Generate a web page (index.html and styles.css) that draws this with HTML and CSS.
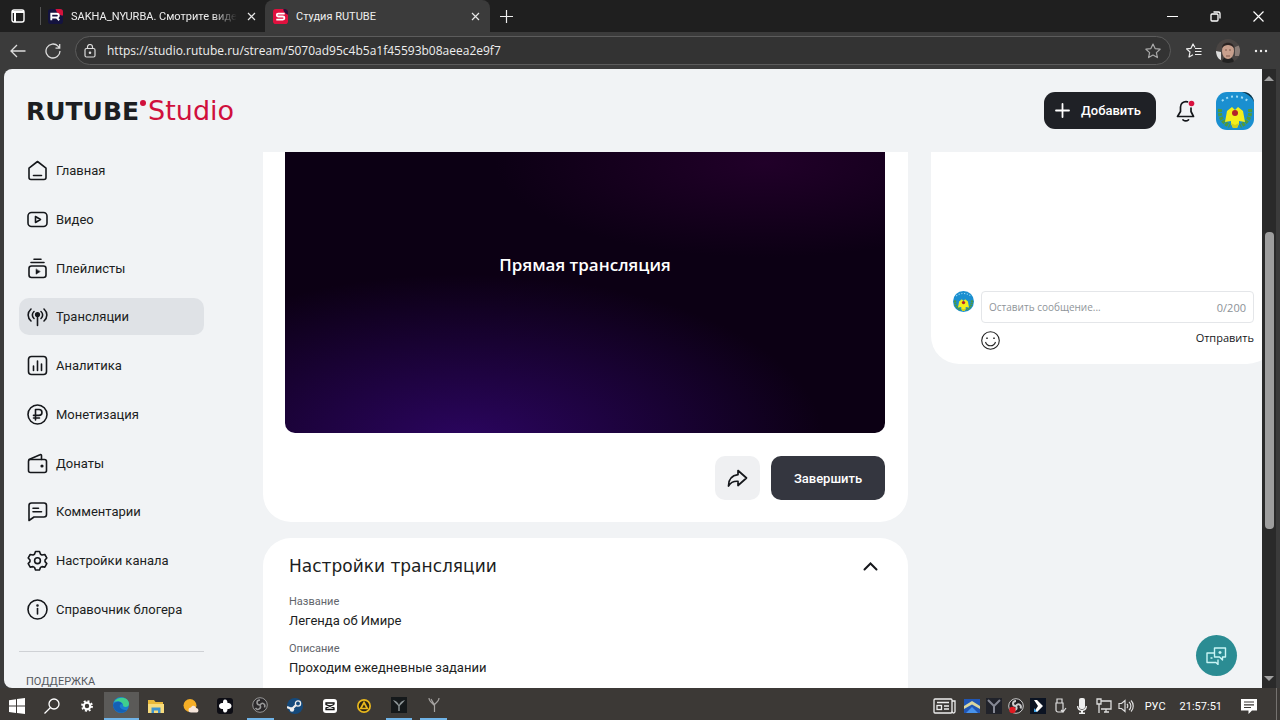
FILE: index.html
```html
<!DOCTYPE html>
<html lang="ru">
<head>
    <meta charset="UTF-8">
    <meta name="viewport" content="width=device-width, initial-scale=1.0">
    <title>Студия RUTUBE</title>
    <link rel="stylesheet" href="styles.css">
</head>
<body>
    <!-- общие картинки -->
    <svg class="defs" aria-hidden="true">
        <symbol id="emblem" viewBox="0 0 38 38">
            <rect width="38" height="38" fill="#1a8fd0"/>
            <path d="M26 0h12v10C36 5 32 2 26 0z" fill="#10303f"/>
            <path d="M6 9C13 3 25 3 32 9" fill="none" stroke="#9fdcf5" stroke-width="2" stroke-dasharray="2 3"/>
            <path d="M4 17c-1 8 3 14 10 17M34 17c1 8-3 14-10 17" fill="none" stroke="#4f9a3c" stroke-width="4" stroke-dasharray="3 1"/>
            <path d="M9 30l2-11 5-4 3 3 3-3 5 4 2 11-6-1v3l-2 4h-4l-2-4v-3z" fill="#f3ee1c"/>
            <path d="M15 31l4 2 4-2-2 5h-4z" fill="#d0cf1c"/>
            <circle cx="19" cy="21" r="3" fill="#b3202b"/>
        </symbol>
    </svg>

    <div class="tabs">
        <button class="tab-menu" aria-label="Вкладки">
            <svg width="14" height="14" viewBox="0 0 14 14" fill="none" stroke="#fff" stroke-width="1.4"><rect x="1" y="1" width="12" height="12" rx="2"/><path d="M1 3h12M4 3v10" stroke-width="2"/></svg>
        </button>
        <div class="tab">
            <svg class="favicon" viewBox="0 0 16 16"><rect width="16" height="16" rx="3" fill="#14133f"/><path d="M8 0h5a3 3 0 0 1 3 3v4C12 7 9 4 8 0z" fill="#d4133c"/><path d="M3.500 12V5h6a2 2 0 0 1 0 4h-6M9 9l3 3" fill="none" stroke="#fff" stroke-width="2"/></svg>
            <span class="tab-title faded">SAKHA_NYURBA. Смотрите виде</span>
            <button class="tab-close" aria-label="Закрыть"><svg width="9" height="9" viewBox="0 0 9 9" stroke="#e6e6e6" stroke-width="1.2"><path d="M1 1l7 7M8 1l-7 7"/></svg></button>
        </div>
        <div class="tab active">
            <svg class="favicon" viewBox="0 0 16 16"><rect width="16" height="16" rx="3" fill="#e0103e"/><path d="M11 0h2a3 3 0 0 1 3 3v3C13 5 11 3 11 0z" fill="#2b123b"/><path d="M12.500 5H5.500a1.500 1.500 0 0 0 0 3h5a1.700 1.700 0 0 1 0 3.400H3.500" fill="none" stroke="#fff" stroke-width="1.900"/></svg>
            <span class="tab-title">Студия RUTUBE</span>
            <button class="tab-close" aria-label="Закрыть"><svg width="9" height="9" viewBox="0 0 9 9" stroke="#e6e6e6" stroke-width="1.2"><path d="M1 1l7 7M8 1l-7 7"/></svg></button>
        </div>
        <button class="tab-new" aria-label="Новая вкладка"><svg width="13" height="13" viewBox="0 0 13 13" stroke="#eee" stroke-width="1.2"><path d="M6.500 0v13M0 6.500h13"/></svg></button>
        <div class="window-buttons">
            <button aria-label="Свернуть"><svg width="11" height="11" viewBox="0 0 11 11" stroke="#fff"><path d="M0 5.500h11"/></svg></button>
            <button aria-label="Восстановить"><svg width="11" height="11" viewBox="0 0 11 11" fill="none" stroke="#fff" stroke-width="1.300"><rect x="1" y="3" width="7" height="7" rx="1"/><path d="M3.500 1h5A1.500 1.500 0 0 1 10 2.500v5"/></svg></button>
            <button aria-label="Закрыть окно"><svg width="11" height="11" viewBox="0 0 11 11" stroke="#fff" stroke-width="1.200"><path d="M.5.5l10 10M10.500.5l-10 10"/></svg></button>
        </div>
    </div>

    <div class="toolbar">
        <button aria-label="Назад"><svg width="16" height="14" viewBox="0 0 16 14" fill="none" stroke="#ddd" stroke-width="1.300"><path d="M15.500 7H1M7 1L1 7l6 6"/></svg></button>
        <button aria-label="Обновить"><svg width="16" height="16" viewBox="0 0 16 16" fill="none" stroke="#ddd" stroke-width="1.300"><path d="M15 8a7 7 0 1 1-2-4.900L14.500 5M14.700 1v4.200h-4.200"/></svg></button>
        <div class="address">
            <svg width="12" height="14" viewBox="0 0 12 14" fill="none" stroke="#ddd" stroke-width="1.200"><rect x="1" y="4.500" width="10" height="8.500" rx="1.500"/><path d="M3.500 4.500V3a2.500 2.500 0 0 1 5 0v1.500"/><circle cx="6" cy="8.700" r=".7" fill="#ddd"/></svg>
            <input type="text" aria-label="Адрес" value="https://studio.rutube.ru/stream/5070ad95c4b5a1f45593b08aeea2e9f7">
            <button aria-label="В избранное"><svg width="16" height="16" viewBox="0 0 16 16" fill="none" stroke="#a9a9a9" stroke-width="1.200" stroke-linejoin="round"><path d="M8 1l2.100 4.600 5 .6-3.700 3.400 1 5L8 12.100l-4.400 2.500 1-5L.9 6.200l5-.6z"/></svg></button>
        </div>
        <div class="toolbar-right">
            <button aria-label="Избранное"><svg width="16" height="16" viewBox="0 0 16 16" fill="none" stroke="#eee" stroke-width="1.200" stroke-linejoin="round"><path d="M9 4.500L7 1 5 5.300l-4.500.6L4 9l-1 5 4-2.300M9 5.500h6.500M9 8.500h6.500M9 11.500h6.500"/></svg></button>
            <button aria-label="Профиль">
                <svg width="24" height="24" viewBox="0 0 24 24"><defs><clipPath id="face"><circle cx="12" cy="12" r="12"/></clipPath></defs><g clip-path="url(#face)"><rect width="24" height="24" fill="#4a4543"/><path d="M0 12l5 1v8l-5-2z" fill="#ddd"/><path d="M24 6l-5 2v9h5z" fill="#8b7d77"/><path d="M6 24c0-5 3-6 6-6s6 1 6 6z" fill="#222"/><ellipse cx="12" cy="12" rx="6" ry="8" fill="#c9a08d"/><path d="M6 9c0-7 12-7 12 0-3-4-9-4-12 0z" fill="#2a2322"/><path d="M9 11h2M13 11h2M10 17h4" stroke="#80584c"/></g></svg>
            </button>
            <button aria-label="Ещё"><svg width="14" height="4" viewBox="0 0 14 4" fill="#eee"><circle cx="2" cy="2" r="1.200"/><circle cx="7" cy="2" r="1.200"/><circle cx="12" cy="2" r="1.200"/></svg></button>
        </div>
    </div>

    <div class="window">
        <div class="page">
            <header class="header">
                <a class="logo" href="#"><span class="logo-main">RUTUBE</span><span class="logo-dot"></span><span class="logo-sub">Studio</span></a>
                <div class="header-actions">
                    <button class="add-button"><svg width="15" height="15" viewBox="0 0 15 15" stroke="#fff" stroke-width="1.800" stroke-linecap="round"><path d="M7.500 1v13M1 7.500h13"/></svg>Добавить</button>
                    <button class="bell" aria-label="Уведомления"><svg width="20" height="22" viewBox="0 0 20 22" fill="none" stroke="#15171b" stroke-width="1.700" stroke-linejoin="round" stroke-linecap="round"><path d="M11.500 1.800C7 1 4.500 4 4.500 7v4.500L1.500 16.500h16L15 11.500V8M7 19.800c1.500 1.200 4 1.200 5.500 0"/><circle cx="15.500" cy="3.500" r="2.800" fill="#d9123f" stroke="none"/></svg></button>
                    <button class="avatar" aria-label="Профиль"><svg width="38" height="38"><use href="#emblem"/></svg></button>
                </div>
            </header>

            <div class="content">
                <aside class="sidebar">
                    <nav>
                        <a href="#"><svg viewBox="0 0 21 21"><path d="M2 8.200L10.500 1.500 19 8.200V17.500a2 2 0 0 1-2 2H4a2 2 0 0 1-2-2zM6.500 15.500h8"/></svg>Главная</a>
                        <a href="#"><svg viewBox="0 0 21 21"><rect x="1" y="3.500" width="19" height="14" rx="3.500"/><path d="M8.500 7.500v6l5-3z"/></svg>Видео</a>
                        <a href="#"><svg viewBox="0 0 21 21"><rect x="2" y="8" width="17" height="11.500" rx="2.500"/><path d="M4 4.500h13M7 1.200h7"/><path d="M9 11.200v5l4-2.500z" fill="#15171b" stroke-width=".5"/></svg>Плейлисты</a>
                        <a href="#" class="active"><svg viewBox="0 0 21 21"><path d="M10.500 8v11.500M4 3C.2 6.500.2 11.500 4 15M17 3c3.800 3.500 3.800 8.500 0 12M7 5.500c-2.200 2-2.200 5 0 7M14 5.500c2.200 2 2.200 5 0 7"/><circle cx="10.500" cy="8.500" r="1.800" fill="#15171b"/></svg>Трансляции</a>
                        <a href="#"><svg viewBox="0 0 21 21"><rect x="1.500" y="1.500" width="18" height="18" rx="3"/><path d="M6.500 11v4.500M10.500 6v9.500M14.500 9v6.500"/></svg>Аналитика</a>
                        <a href="#"><svg viewBox="0 0 21 21"><circle cx="10.500" cy="10.500" r="9.500"/><path d="M8.500 16V5.500H12a2.900 2.900 0 0 1 0 5.900H6.500M6.500 14h6"/></svg>Монетизация</a>
                        <a href="#"><svg viewBox="0 0 21 21"><rect x="1.500" y="6.500" width="18" height="13" rx="2"/><path d="M2 6.500l11-4.800a1 1 0 0 1 1.500.8v4"/><circle cx="15" cy="13" r=".8" fill="#15171b"/></svg>Донаты</a>
                        <a href="#"><svg viewBox="0 0 21 21"><path d="M4.500 2h12.500a2.500 2.500 0 0 1 2.500 2.500v9a2.500 2.500 0 0 1-2.500 2.500H7l-5 3.500V4.500A2.500 2.500 0 0 1 4.500 2zM6 7.200h5.500M6 10.800h8.500"/></svg>Комментарии</a>
                        <a href="#"><svg viewBox="0 0 21 21"><path d="M8.500 1.500h4l1 2.700 1.500.8 2.800-.5 2 3.400-1.800 2.100v1.600l1.800 2-2 3.500-2.800-.5-1.500.8-1 2.600h-4l-1-2.600-1.500-.8-2.800.5-2-3.500 1.800-2V10L1.200 7.900l2-3.400 2.800.5 1.500-.8z"/><circle cx="10.500" cy="10.700" r="2.900"/></svg>Настройки канала</a>
                        <a href="#"><svg viewBox="0 0 21 21"><circle cx="10.500" cy="10.500" r="9.500"/><path d="M10.500 9.500v5.500"/><circle cx="10.500" cy="6.500" r=".5" fill="#15171b"/></svg>Справочник блогера</a>
                    </nav>
                    <p class="sidebar-title">ПОДДЕРЖКА</p>
                </aside>

                <main>
                    <section class="card stream">
                        <div class="player">Прямая трансляция</div>
                        <div class="stream-actions">
                            <button class="share" aria-label="Поделиться"><svg width="21" height="19" viewBox="0 0 21 19" fill="none" stroke="#15171b" stroke-width="1.700" stroke-linejoin="round"><path d="M11 1.500l8.500 7.500-8.500 7.500v-4.200C6.500 12 3.500 13.500 1.500 17 1.500 10.500 5 6.500 11 5.700z"/></svg></button>
                            <button class="finish">Завершить</button>
                        </div>
                    </section>
                    <section class="card settings">
                        <div class="settings-head">
                            <h2>Настройки трансляции</h2>
                            <button aria-label="Свернуть настройки"><svg width="15" height="9" viewBox="0 0 15 9" fill="none" stroke="#15171b" stroke-width="2" stroke-linecap="round"><path d="M1.500 7.500l6-6 6 6"/></svg></button>
                        </div>
                        <dl>
                            <dt>Название</dt>
                            <dd>Легенда об Имире</dd>
                            <dt>Описание</dt>
                            <dd>Проходим ежедневные задании</dd>
                        </dl>
                    </section>
                </main>

                <section class="card chat">
                    <form class="chat-form">
                        <svg class="chat-avatar"><use href="#emblem"/></svg>
                        <div class="chat-body">
                            <div class="chat-field">
                                <input type="text" aria-label="Сообщение" placeholder="Оставить сообщение...">
                                <span>0/200</span>
                            </div>
                            <div class="chat-actions">
                                <button type="button" aria-label="Смайлы"><svg width="19" height="19" viewBox="0 0 19 19" fill="none" stroke="#222" stroke-width="1.100"><circle cx="9.500" cy="9.500" r="8.800"/><path d="M4.500 11c1.500 5 8.500 5 10 0"/><path d="M6 6.500v1.500M13 6.500v1.500" stroke-width="1.500"/></svg></button>
                                <button type="submit" class="send">Отправить</button>
                            </div>
                        </div>
                    </form>
                </section>
            </div>

            <button class="help" aria-label="Помощь"><svg width="21" height="18" viewBox="0 0 21 18" fill="none" stroke="#c9f5f5" stroke-width="1.400" stroke-linejoin="round"><path d="M8.500 1h11v9h-3v3l-3-3h-5zM8.500 6H1v9.500h9l2 2v-5M14 4v3M12.500 5.500h3M4.500 11h2"/></svg></button>
        </div>
        <div class="scrollbar"><i class="up"></i><div class="thumb"></div><i class="down"></i></div>
    </div>

    <footer class="taskbar">
        <div class="apps">
            <button aria-label="Пуск"><svg viewBox="0 0 16 16" fill="#fff"><path d="M0 2.200l7-1v6.400H0zM8 1.100L16 0v7.600H8zM0 8.500h7v6.400l-7-1zM8 8.500h8V16l-8-1.100z"/></svg></button>
            <button aria-label="Поиск"><svg viewBox="0 0 16 16" fill="none" stroke="#fff" stroke-width="1.300"><circle cx="10" cy="6" r="5"/><path d="M6.500 9.500L.5 15.500"/></svg></button>
            <button aria-label="Параметры"><svg viewBox="0 0 16 16" fill="none" stroke="#fff"><circle cx="8" cy="8" r="3.300" stroke-width="2.200"/><circle cx="8" cy="8" r="5" stroke-width="1.800" stroke-dasharray="1.960 1.960"/></svg></button>
            <button aria-label="Edge" class="current"><svg viewBox="0 0 16 16"><circle cx="8" cy="8" r="8" fill="#1b7fd0"/><path d="M1 5C4-1 16-1 16 7c0 3-4 4-6 2 1-3-4-6-9-4z" fill="#3fcf8e"/><path d="M0 8c2-4 8-4 9-1-4 0-3 6 5 6-4 5-13 3-14-5z" fill="#1560b4"/></svg></button>
            <button aria-label="Проводник"><svg viewBox="0 0 16 16"><path d="M0 2h6l1.500 2H15v11H0z" fill="#e9b93a"/><path d="M0 6h16v9H0z" fill="#f8dc7c"/><path d="M3.500 15V9.500h9V15H10v-2.500H6V15z" fill="#3f94cf"/></svg></button>
            <button aria-label="Погода"><svg viewBox="0 0 16 16"><circle cx="7" cy="7.500" r="6.500" fill="#f5ae26"/><path d="M8 14.500a2.500 2.500 0 0 1 0-5c1-3 5-2 5 .5 3 0 3.500 4.500 0 4.500z" fill="#f6e6db"/></svg></button>
            <button aria-label="Алиса"><svg viewBox="0 0 16 16"><rect width="16" height="16" rx="3" fill="#0d0d14"/><path d="M8 1.500c2 0 2.500 2 2.500 3.500 1.500 0 4 .5 4 3s-2.500 3-4 3c0 1.500-.5 3.500-2.500 3.500S6 12.500 6 11c-1.500 0-4-.5-4-3s2.500-3 4-3c0-1.500 0-3.500 2-3.500z" fill="#fff"/></svg></button>
            <button aria-label="OBS" class="open"><svg viewBox="0 0 16 16" fill="none" stroke="#999"><circle cx="8" cy="8" r="7.300" fill="#2a282a"/><path d="M8 8C4 8 4 3 8 3M8 8c2-3.500 6-1 4.500 2.500M8 8c2 3.500-2.500 6-4.500 3" stroke-width="1.500"/></svg></button>
            <button aria-label="Steam"><svg viewBox="0 0 16 16"><circle cx="8" cy="8" r="8" fill="#154a7c"/><path d="M0 9l5 2 4-4" fill="none" stroke="#eee" stroke-width="2.200"/><circle cx="11" cy="5.500" r="2.600" fill="#154a7c" stroke="#eee" stroke-width="1.300"/><circle cx="5" cy="11.500" r="2.200" fill="#eee"/></svg></button>
            <button aria-label="CapCut"><svg viewBox="0 0 16 16"><rect x="1" y="1" width="14" height="14" rx="3" fill="#fff"/><path d="M12 6.500V5H4v1.500L12 10v1.500H4V10l8-3.500" fill="none" stroke="#111" stroke-width="1.300"/></svg></button>
            <button aria-label="AIMP"><svg viewBox="0 0 16 16"><circle cx="8" cy="8" r="7" fill="#e9b81d"/><circle cx="8" cy="8" r="5.300" fill="#2b2618"/><path d="M8 4.500l3.300 6H4.700z" fill="none" stroke="#e9b81d" stroke-width="1.700"/></svg></button>
            <button aria-label="Лаунчер" class="open"><svg viewBox="0 0 16 16"><rect width="16" height="16" fill="#15191b"/><path d="M2 3c4 1 5 3 6 5 1-2 2-4 6-5-2 3-4 4-5.300 6v5H7.300V9C6 7 4 6 2 3z" fill="#8e9698"/></svg></button>
            <button aria-label="Игра" class="open"><svg viewBox="0 0 16 16" fill="none" stroke="#a5a2a0"><path d="M3 1c0 3 3 5 5 7 2-2 5-4 5-7M5 2l3.500 6v7" stroke-width="1.200"/></svg></button>
        </div>
        <div class="tray">
            <svg class="news" viewBox="0 0 23 16" fill="none" stroke="#eee" stroke-width="1.300"><rect x="1" y="1" width="18" height="14" rx="1"/><path d="M19 3h3v10.500a1.500 1.500 0 0 1-3 0M4 4.500h12M11 8h5M11 11h5"/><rect x="4" y="7.500" width="4.500" height="4"/></svg>
            <svg viewBox="0 0 16 16"><rect y="1" width="16" height="14" fill="#2056b5"/><path d="M0 8l8-5 8 5v3L8 6.500 0 11z" fill="#d8d6a0"/><path d="M2 15l6-6 6 6z" fill="#4792ec"/></svg>
            <svg viewBox="0 0 16 16"><rect width="16" height="16" fill="#20222a"/><path d="M2 2l6 6 6-6M8 8v7" fill="none" stroke="#858894" stroke-width="2"/></svg>
            <svg viewBox="0 0 16 16" fill="none" stroke="#ccc"><circle cx="8" cy="8" r="7.300" fill="#242224"/><path d="M8 8C4 8 4 3 8 3M8 8c2-3.500 6-1 4.500 2.500M8 8c2 3.500-2.500 6-4.500 3" stroke-width="2"/><circle cx="4.500" cy="12" r="3.200" fill="#df1b22" stroke="none"/></svg>
            <svg viewBox="0 0 16 16"><rect width="16" height="16" fill="#0b1322"/><path d="M4 2h3l6 6-6 6H4l4-6z" fill="#fff"/><path d="M4 10l3 4H4z" fill="#38a1e5"/></svg>
            <svg viewBox="0 0 16 16" fill="none" stroke="#ddd" stroke-width="1.200"><path d="M5 5V1h5v4M4 5h7v7a2 2 0 0 1-2 2H6a2 2 0 0 1-2-2zM9 12l2 2 3-4"/></svg>
            <svg viewBox="0 0 16 16" fill="#eee"><rect x="5" y="0" width="6" height="11" rx="2"/><path d="M3 8h1.200c.5 5 7.100 5 7.600 0H13c0 3-1.500 4.500-4 5v1.500h2V16H5v-1.500h2V13c-2.500-.5-4-2-4-5z"/></svg>
            <svg viewBox="0 0 16 16" fill="none" stroke="#ddd" stroke-width="1.300"><path d="M5 3h10v8H5M8 14h5M10 11v3M1 1h4v5H1zM3 6v9"/></svg>
            <svg viewBox="0 0 16 16" fill="none" stroke="#ddd" stroke-width="1.200"><path d="M1 5.500h2.500L7 2.500v11l-3.500-3H1zM9 6c1 1 1 3 0 4M11 4c2.500 2 2.500 6 0 8M13 2.500c3 3 3 8 0 11"/></svg>
            <span class="lang">РУС</span>
            <time>21:57:51</time>
            <svg class="notices" viewBox="0 0 16 16"><path d="M0 1h16v11.500h-5L7.500 16v-3.500H0z" fill="#fff"/><path d="M3 4h10M3 6.800h10M3 9.500h7" stroke="#3c3936" stroke-width="1.200"/></svg>
        </div>
    </footer>
</body>
</html>
```
FILE: styles.css
```css
* {
    box-sizing: border-box;
}

body {
    margin: 0;
    height: 100vh;
    display: flex;
    flex-direction: column;
    overflow: hidden;
    background-color: #3b3b3b;
    font-family: Roboto, "Noto Sans", sans-serif;
    color: #1c1e22;
}

button {
    display: flex;
    align-items: center;
    justify-content: center;
    padding: 0;
    border: none;
    background: none;
    font-family: inherit;
    cursor: pointer;
}

a {
    color: inherit;
    text-decoration: none;
}

svg {
    display: block;
    flex-shrink: 0;
}

.defs {
    display: none;
}

/* вкладки браузера */
.tabs {
    display: flex;
    align-items: center;
    height: 32px;
    background-color: #1f1f1f;
    font-size: 11px;
    color: #eee;
}

.tab-menu {
    width: 41px;
    height: 18px;
    padding-right: 4px;
    border-right: 1px solid #555;
}

.tab {
    display: flex;
    align-items: center;
    gap: 8px;
    width: 224px;
    height: 32px;
    padding: 0 7px;
}

.tab.active {
    width: 225px;
    padding: 0 8px;
    background-color: #3b3b3b;
    border-radius: 8px 8px 0 0;
}

.favicon {
    width: 15px;
    height: 15px;
}

.tab-title {
    flex: 1;
    white-space: nowrap;
}

.tab-title.faded {
    mask-image: linear-gradient(to right, #000 85%, transparent);
}

.tab-close {
    width: 14px;
}

.tab-new {
    width: 32px;
}

.window-buttons {
    display: flex;
    margin-left: auto;
}

.window-buttons button {
    width: 43px;
}

/* адресная строка */
.toolbar {
    display: flex;
    align-items: center;
    height: 37px;
    background-color: #3b3b3b;
}

.toolbar > button {
    width: 35px;
}

.address {
    flex: 1;
    display: flex;
    align-items: center;
    gap: 11px;
    height: 29px;
    margin-left: 5px;
    padding: 0 9px 0 8px;
    border: 1px solid #5c5c5c;
    border-radius: 15px;
    background-color: #333;
}

.address input {
    flex: 1;
    padding: 0;
    border: none;
    outline: none;
    background: none;
    font-family: "Open Sans", "Noto Sans", sans-serif;
    font-size: 12px;
    color: #eee;
}

.toolbar-right {
    display: flex;
    align-items: center;
    gap: 14px;
    padding: 0 12px 0 15px;
}

/* окно страницы */
.window {
    flex: 1;
    display: flex;
    min-height: 0;
    padding: 0 4px;
}

.page {
    position: relative;
    flex: 1;
    display: flex;
    flex-direction: column;
    min-width: 0;
    overflow: hidden;
    border-radius: 8px 0 0 8px;
    background-color: #f1f3f5;
}

.header {
    display: flex;
    align-items: center;
    justify-content: space-between;
    height: 83px;
    flex-shrink: 0;
    padding: 0 8px 0 22px;
}

.logo {
    display: flex;
    align-items: baseline;
    font-family: "DejaVu Sans", sans-serif;
}

.logo-main {
    font-size: 25px;
    font-weight: bold;
}

.logo-dot {
    align-self: flex-start;
    width: 6px;
    height: 6px;
    margin: 5px 2px 0 1px;
    border-radius: 50%;
    background-color: #d0103c;
}

.logo-sub {
    font-size: 27px;
    color: #d0103c;
}

.header-actions {
    display: flex;
    align-items: center;
    gap: 20px;
}

.add-button {
    gap: 11px;
    width: 112px;
    height: 37px;
    padding-right: 4px;
    border-radius: 11px;
    background-color: #1f2126;
    color: #fff;
    font-size: 13px;
    font-weight: 500;
}

.avatar {
    overflow: hidden;
    border-radius: 11px;
}

.content {
    flex: 1;
    display: grid;
    grid-template-columns: 244px 1fr 367px;
    align-items: start;
    min-height: 0;
    overflow: hidden;
    margin-right: -13px;
    padding-left: 15px;
}

.sidebar {
    padding-right: 59px;
}

.sidebar nav {
    display: flex;
    flex-direction: column;
    justify-content: space-between;
    height: 476px;
}

.sidebar a {
    display: flex;
    align-items: center;
    gap: 8px;
    height: 37px;
    padding-left: 8px;
    border-radius: 10px;
    font-size: 13px;
}

.sidebar a.active {
    background-color: #dfe2e6;
}

.sidebar a svg {
    width: 21px;
    height: 21px;
    fill: none;
    stroke: #15171b;
    stroke-width: 1.6;
    stroke-linecap: round;
    stroke-linejoin: round;
}

.sidebar-title {
    margin: 23px 0 0;
    padding: 22px 7px 0;
    border-top: 1px solid #cfd1d5;
    font-size: 11px;
    line-height: 16px;
    color: #55585e;
}

main {
    min-width: 0;
}

.card {
    background-color: #fff;
    border-radius: 28px;
}

.stream {
    margin-top: -57px;
    padding: 0 23px 22px 22px;
}

.player {
    display: flex;
    align-items: center;
    justify-content: center;
    height: 338px;
    border-radius: 10px;
    background:
        radial-gradient(ellipse 60% 50% at 30% 103%, #2b0560, transparent),
        radial-gradient(ellipse 45% 28% at 80% 20%, #210029, transparent),
        #0c0014;
    font-family: "Open Sans", "Noto Sans", sans-serif;
    font-size: 17px;
    font-weight: 600;
    color: #fff;
}

.stream-actions {
    display: flex;
    justify-content: flex-end;
    gap: 11px;
    margin-top: 23px;
}

.stream-actions button {
    height: 44px;
    border-radius: 10px;
}

.share {
    width: 45px;
    background-color: #eff0f2;
}

.finish {
    width: 114px;
    background-color: #34363f;
    color: #fff;
    font-size: 13px;
    font-weight: 500;
}

.settings {
    height: 400px;
    margin-top: 16px;
    padding: 16px 26px;
}

.settings-head {
    display: flex;
    align-items: center;
    justify-content: space-between;
    padding-right: 4px;
}

.settings h2 {
    margin: 0;
    font-family: "DejaVu Sans", sans-serif;
    font-size: 17px;
    font-weight: normal;
    line-height: 24px;
}

.settings dl {
    margin: 15px 0 0;
}

.settings dt {
    font-size: 11px;
    line-height: 18px;
    color: #62656b;
}

.settings dd {
    margin: 0 0 9px;
    font-size: 13px;
    line-height: 20px;
}

/* чат */
.chat {
    display: flex;
    align-items: flex-end;
    height: 212px;
    margin-left: 23px;
    padding: 0 21px 14px 22px;
    border-radius: 0 0 28px 28px;
    font-family: "Open Sans", "Noto Sans", sans-serif;
}

.chat-form {
    flex: 1;
    display: flex;
    gap: 7px;
}

.chat-avatar {
    width: 21px;
    height: 21px;
    border-radius: 50%;
}

.chat-body {
    flex: 1;
}

.chat-field {
    display: flex;
    align-items: center;
    height: 32px;
    padding: 0 7px;
    border: 1px solid #e4e6e9;
    border-radius: 4px;
    font-size: 11px;
    color: #8b9197;
}

.chat-field input {
    flex: 1;
    min-width: 0;
    padding: 0;
    border: none;
    outline: none;
    font-family: inherit;
    font-size: 10px;
}

.chat-field input::placeholder {
    color: #8f959a;
}

.chat-actions {
    display: flex;
    justify-content: space-between;
    align-items: flex-start;
    margin-top: 8px;
}

.send {
    font-size: 11px;
    font-weight: 500;
    line-height: 14px;
    color: #15171b;
}

.help {
    position: absolute;
    right: 25px;
    bottom: 12px;
    width: 41px;
    height: 41px;
    border-radius: 50%;
    background-color: #2b8c93;
}

.scrollbar {
    display: flex;
    flex-direction: column;
    align-items: center;
    justify-content: space-between;
    width: 14px;
    padding: 7px 0;
    background-color: #2a2a2a;
}

.scrollbar .thumb {
    width: 9px;
    height: 49%;
    margin-top: 4px;
    border-radius: 4px;
    background-color: #9e9e9e;
}

.scrollbar i {
    border: 5px solid transparent;
}

.scrollbar .up {
    border-top: none;
    border-bottom-color: #a0a0a0;
}

.scrollbar .down {
    border-bottom: none;
    border-top-color: #a0a0a0;
}

/* панель задач */
.taskbar {
    display: flex;
    justify-content: space-between;
    height: 32px;
    background-color: #3c3936;
}

.apps {
    display: grid;
    grid-template-columns: repeat(13, 1fr);
    width: 451px;
    padding-top: 4px;
}

.apps svg,
.tray svg {
    width: 16px;
    height: 16px;
}

.apps .current {
    background-color: #5b5a58;
    border-bottom: 2px solid #70b4e8;
}

.apps .open {
    margin: 0 4px;
    border-bottom: 2px solid #70b4e8;
}

.tray {
    display: flex;
    align-items: center;
    gap: 6px;
    margin-right: 3px;
    padding: 4px 19px 0 0;
    border-right: 1px solid #75726f;
    font-size: 11px;
    color: #fff;
}

.tray .news {
    width: 23px;
    margin-right: 2px;
}

.lang {
    margin-left: 5px;
}

time {
    margin: 0 13px 0 8px;
}
```
